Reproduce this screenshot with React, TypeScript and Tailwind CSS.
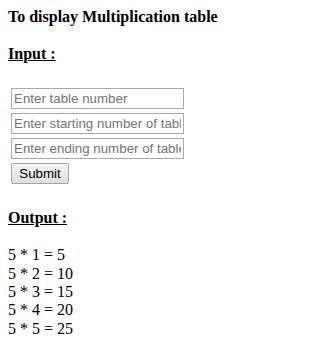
import { useState } from "react";

const fieldClass =
  "block w-[173px] h-[21px] border border-[#a9a9a9] bg-white px-[2px] text-[13.33px] font-['Liberation_Sans',Arial,sans-serif] text-black placeholder:text-[#757575] outline-none";

export default function App() {
  const [table, setTable] = useState("5");
  const [start, setStart] = useState("1");
  const [end, setEnd] = useState("5");
  const [rows, setRows] = useState<number[]>([1, 2, 3, 4, 5]);

  const n = parseInt(table) || 0;

  const handleSubmit = (e: React.FormEvent) => {
    e.preventDefault();
    const a = parseInt(start) || 0;
    const b = parseInt(end) || 0;
    const list: number[] = [];
    for (let i = a; i <= b; i++) list.push(i);
    setRows(list);
  };

  return (
    <div className="min-h-screen bg-white p-[8px] font-['Liberation_Serif','Times_New_Roman',serif] text-[16px] leading-[18.4px] text-black">
      <div className="font-bold">To display Multiplication table</div>

      <div className="mt-[18.4px] font-bold underline">Input :</div>

      {/* Form */}
      <form onSubmit={handleSubmit} className="ml-[3px] mt-[25px] flex flex-col gap-[4px]">
        <input
          className={fieldClass}
          placeholder="Enter table number"
          value={table === "5" ? "" : table}
          onChange={(e) => setTable(e.target.value)}
        />
        <input
          className={fieldClass}
          placeholder="Enter starting number of table"
          value={start === "1" ? "" : start}
          onChange={(e) => setStart(e.target.value)}
        />
        <input
          className={fieldClass}
          placeholder="Enter ending number of table"
          value={end === "5" ? "" : end}
          onChange={(e) => setEnd(e.target.value)}
        />
        <div>
          <button
            type="submit"
            className="h-[21px] w-[58px] rounded-[2px] border border-[#a3a3a3] bg-gradient-to-b from-[#f6f6f6] to-[#dedede] font-['Liberation_Sans',Arial,sans-serif] text-[13.33px] leading-none text-black"
          >
            Submit
          </button>
        </div>
      </form>

      <div className="mt-[25px] font-bold underline">Output :</div>

      {/* Result */}
      <div className="mt-[18.6px]">
        {rows.map((i) => (
          <div key={i}>
            {n} * {i} = {n * i}
          </div>
        ))}
      </div>
    </div>
  );
}
